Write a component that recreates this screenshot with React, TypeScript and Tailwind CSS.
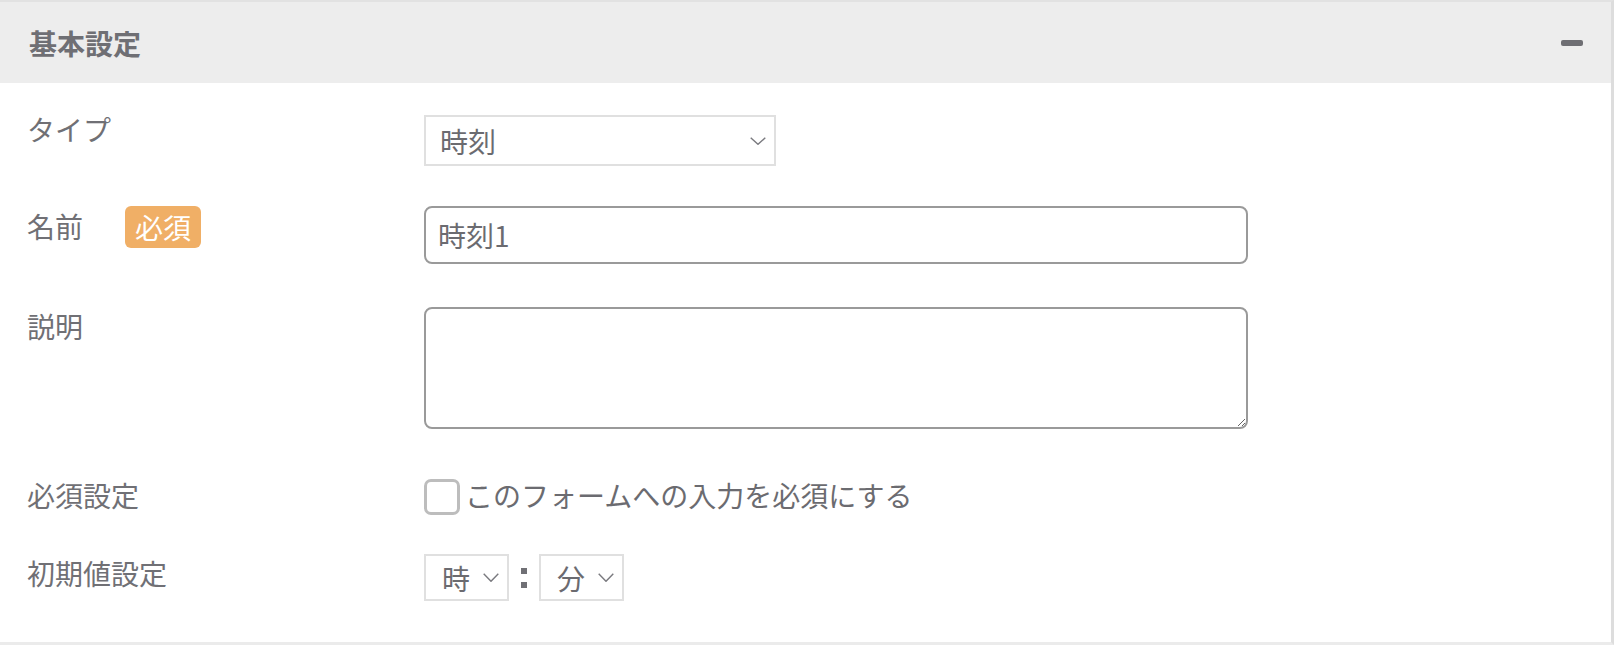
import React from 'react'

const FONT = '"Noto Sans CJK JP", "Noto Sans", sans-serif'

function Chevron({ w = 16, h = 8 }: { w?: number; h?: number }) {
  return (
    <svg width={w} height={h} viewBox={`0 0 ${w} ${h}`} fill="none" className="shrink-0">
      <path d={`M0.7 0.7 L${w / 2} ${h - 0.7} L${w - 0.7} 0.7`} stroke="#7a7a7f" strokeWidth="1.4" />
    </svg>
  )
}

function Label({ children, className = '' }: { children: React.ReactNode; className?: string }) {
  return (
    <div className={`w-[397px] shrink-0 flex items-center text-[28px] leading-[40px] text-[#707075] ${className}`}>
      {children}
    </div>
  )
}

export default function App() {
  return (
    <div className="w-[1614px] bg-white border-t-2 border-r-[3px] border-b-[3px] border-t-[#e2e2e2] border-r-[#dddddd] border-b-[#ebebeb]" style={{ fontFamily: FONT }}>
      {/* header */}
      <div className="h-[81px] bg-[#ededed] flex items-center justify-between pl-[29px] pr-[28px]">
        <span className="text-[28px] font-bold text-[#6f6f74] leading-none">基本設定</span>
        <span className="block w-[22px] h-[6px] rounded-[2px] bg-[#6e6e73]" />
      </div>

      <div className="pl-[27px] pb-[41px] flex flex-col">
        {/* タイプ */}
        <div className="flex items-start mt-[26px]">
          <Label>タイプ</Label>
          <div className="mt-[6px] w-[352px] h-[51px] border-2 border-[#e0e0e0] flex items-center justify-between pl-[14px] pr-[8px] text-[28px] text-[#6b6b70]">
            <span>時刻</span>
            <Chevron />
          </div>
        </div>

        {/* 名前 */}
        <div className="flex items-start mt-[38px]">
          <Label>
            <span>名前</span>
            <span className="ml-[42px] h-[42px] px-[10px] rounded-[6px] bg-[#f0af66] text-white leading-[42px] text-[28px] mt-[2px]">必須</span>
          </Label>
          <div className="mt-[2px] w-[824px] h-[58px] border-2 border-[#9a9a9a] rounded-[8px] flex items-center pl-[12px] text-[28px] text-[#6b6b70]">
            時刻1
          </div>
        </div>

        {/* 説明 */}
        <div className="flex items-start mt-[42px]">
          <Label>説明</Label>
          <textarea className="mt-[1px] w-[824px] h-[122px] border-2 border-[#9a9a9a] rounded-[8px] outline-none p-[10px] text-[28px] text-[#6b6b70] resize" />
        </div>

        {/* 必須設定 */}
        <div className="flex items-start mt-[46px]">
          <Label>必須設定</Label>
          <label className="flex items-center h-[40px] text-[28px] text-[#6b6b70]">
            <span className="block w-[36px] h-[36px] border-[3px] border-[#bdbdbd] rounded-[7px] mt-[4px] mr-[5px]" />
            このフォームへの入力を必須にする
          </label>
        </div>

        {/* 初期値設定 */}
        <div className="flex items-start mt-[38px]">
          <Label>初期値設定</Label>
          <div className="mt-[1px] flex items-center">
            <div className="w-[85px] h-[47px] border-2 border-[#e0e0e0] flex items-center justify-between pl-[16px] pr-[8px] text-[28px] text-[#6b6b70]">
              <span>時</span>
              <Chevron w={16} h={9} />
            </div>
            <div className="w-[30px] flex flex-col items-center gap-[8px]">
              <span className="block w-[6px] h-[6px] bg-[#707075]" />
              <span className="block w-[6px] h-[6px] bg-[#707075]" />
            </div>
            <div className="w-[85px] h-[47px] border-2 border-[#e0e0e0] flex items-center justify-between pl-[16px] pr-[8px] text-[28px] text-[#6b6b70]">
              <span>分</span>
              <Chevron w={16} h={9} />
            </div>
          </div>
        </div>
      </div>
    </div>
  )
}
